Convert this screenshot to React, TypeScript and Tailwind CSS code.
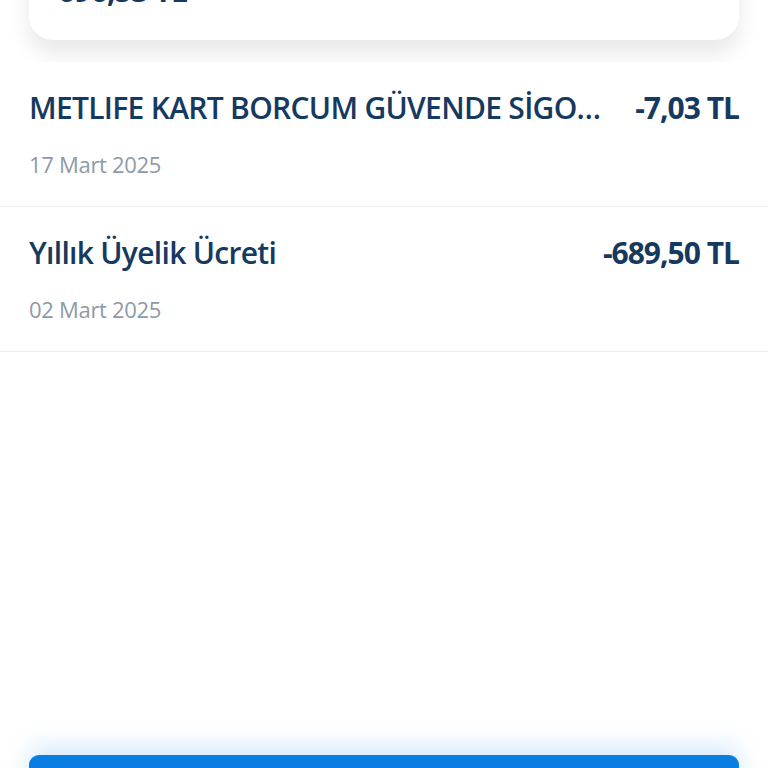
const rows = [
  { title: "METLIFE KART BORCUM GÜVENDE SİGORTA PRİMİ", date: "17 Mart 2025", amount: "-7,03 TL" },
  { title: "Yıllık Üyelik Ücreti", date: "02 Mart 2025", amount: "-689,50 TL" },
];

export default function App() {
  return (
    <div
      className="h-[768px] overflow-hidden bg-white flex flex-col"
      style={{ fontFamily: '"Open Sans", "Noto Sans", sans-serif' }}
    >
      {/* summary card, mostly scrolled off */}
      <div className="bg-white pb-[22px]">
        <div className="mx-[29px] -mt-[51px] pt-[24px] pb-[31px] px-[29px] bg-white rounded-[24px] shadow-[0_14px_22px_rgba(0,0,0,0.09)]">
          <p className="text-[30px] leading-[36px] font-bold tracking-[-0.8px] text-[#163a5f]">696,53 TL</p>
        </div>
      </div>

      {/* transactions */}
      <div className="relative z-10 bg-white">
        {rows.map((r) => (
          <div key={r.date} className="h-[145px] px-[29px] border-b border-[#ececec] pt-[28px]">
            <div className="flex items-center justify-between gap-[34px]">
              <span className="truncate text-[30px] leading-[36px] font-semibold tracking-[-0.7px] text-[#163a5f]">
                {r.title}
              </span>
              <span className="shrink-0 text-[30px] leading-[36px] font-bold tracking-[-1px] text-[#163a5f]">
                {r.amount}
              </span>
            </div>
            <p className="mt-[23px] text-[22px] leading-[30px] font-medium tracking-[-0.3px] text-[#8d9aa8]">{r.date}</p>
          </div>
        ))}
      </div>

      <div className="flex-1" />

      <div className="h-[13px] px-[29px]">
        <button className="w-full h-[56px] rounded-[10px] bg-[#0a7de3] shadow-[0_-8px_24px_rgba(10,125,227,0.18)]" />
      </div>
    </div>
  );
}
